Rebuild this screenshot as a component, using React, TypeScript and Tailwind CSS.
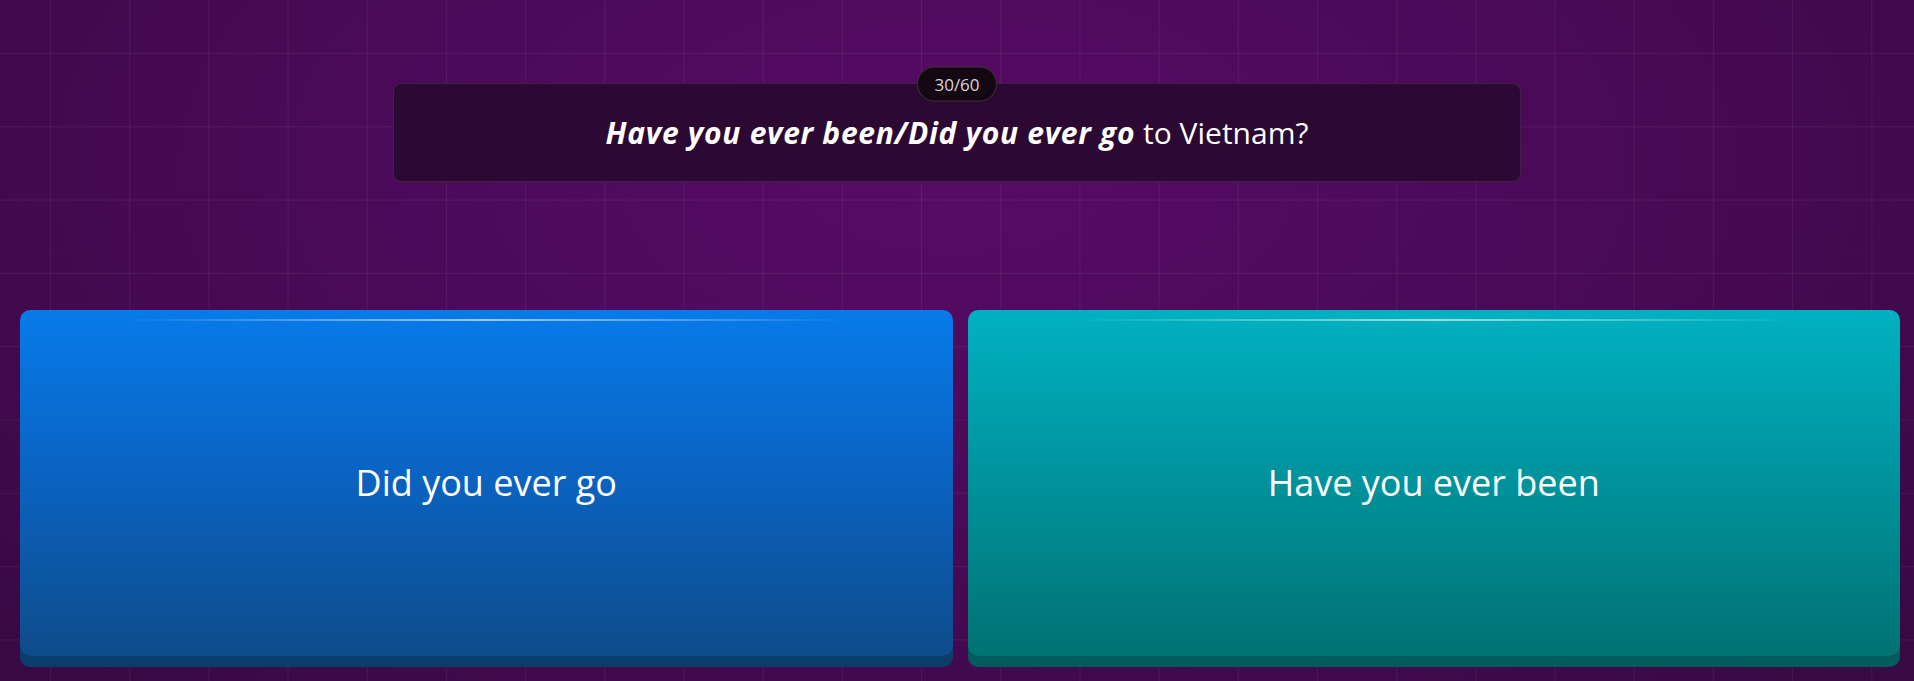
const answers = [
  {
    label: 'Did you ever go',
    className: 'bg-[linear-gradient(180deg,#077be9_0%,#0a64c4_45%,#0e4c8a_100%)] shadow-[0_11px_0_#0b3d6b]',
  },
  {
    label: 'Have you ever been',
    className: 'bg-[linear-gradient(180deg,#00b1c1_0%,#00929c_50%,#007273_100%)] shadow-[0_11px_0_#015b5d]',
  },
]

export default function App() {
  return (
    <div
      className="relative h-[681px] w-full overflow-hidden bg-[radial-gradient(ellipse_at_50%_25%,#570b65_0%,#4c0a5a_40%,#380942_100%)] font-['Open_Sans','Lato',sans-serif]"
    >
      {/* grid */}
      <div className="pointer-events-none absolute inset-0 bg-[linear-gradient(90deg,rgba(255,255,255,0.06)_1px,transparent_1px),linear-gradient(180deg,rgba(255,255,255,0.06)_1px,transparent_1px)] bg-[size:79.2px_73.3px] bg-[position:50px_53px]" />

      <div className="relative flex flex-col">
        {/* Question */}
        <div className="relative mx-auto mt-[83px] flex h-[99px] w-[1128px] items-center justify-center rounded-lg border border-white/10 bg-[#2c0933]">
          <div className="absolute left-1/2 top-0 flex h-[35px] w-[80px] -translate-x-1/2 -translate-y-1/2 items-center justify-center rounded-full border border-white/15 bg-[#140913] text-[17px] text-[#d9d4da]">
            30/60
          </div>
          <p className="text-[30px] text-white">
            <span className="font-bold italic tracking-[0.7px]">Have you ever been/Did you ever go</span> to Vietnam?
          </p>
        </div>

        {/* Answers */}
        <div className="mt-[128px] grid grid-cols-2 gap-[15px] pl-[20px] pr-[14px]">
          {answers.map((a) => (
            <button
              key={a.label}
              className={`relative flex h-[346px] items-center justify-center rounded-[10px] ${a.className}`}
            >
              <span className="absolute left-[11%] right-[11%] top-[9px] h-[2px] bg-[linear-gradient(90deg,transparent,rgba(255,255,255,0.6)_50%,transparent)]" />
              <span className="text-[36px] text-white">{a.label}</span>
            </button>
          ))}
        </div>
      </div>
    </div>
  )
}
